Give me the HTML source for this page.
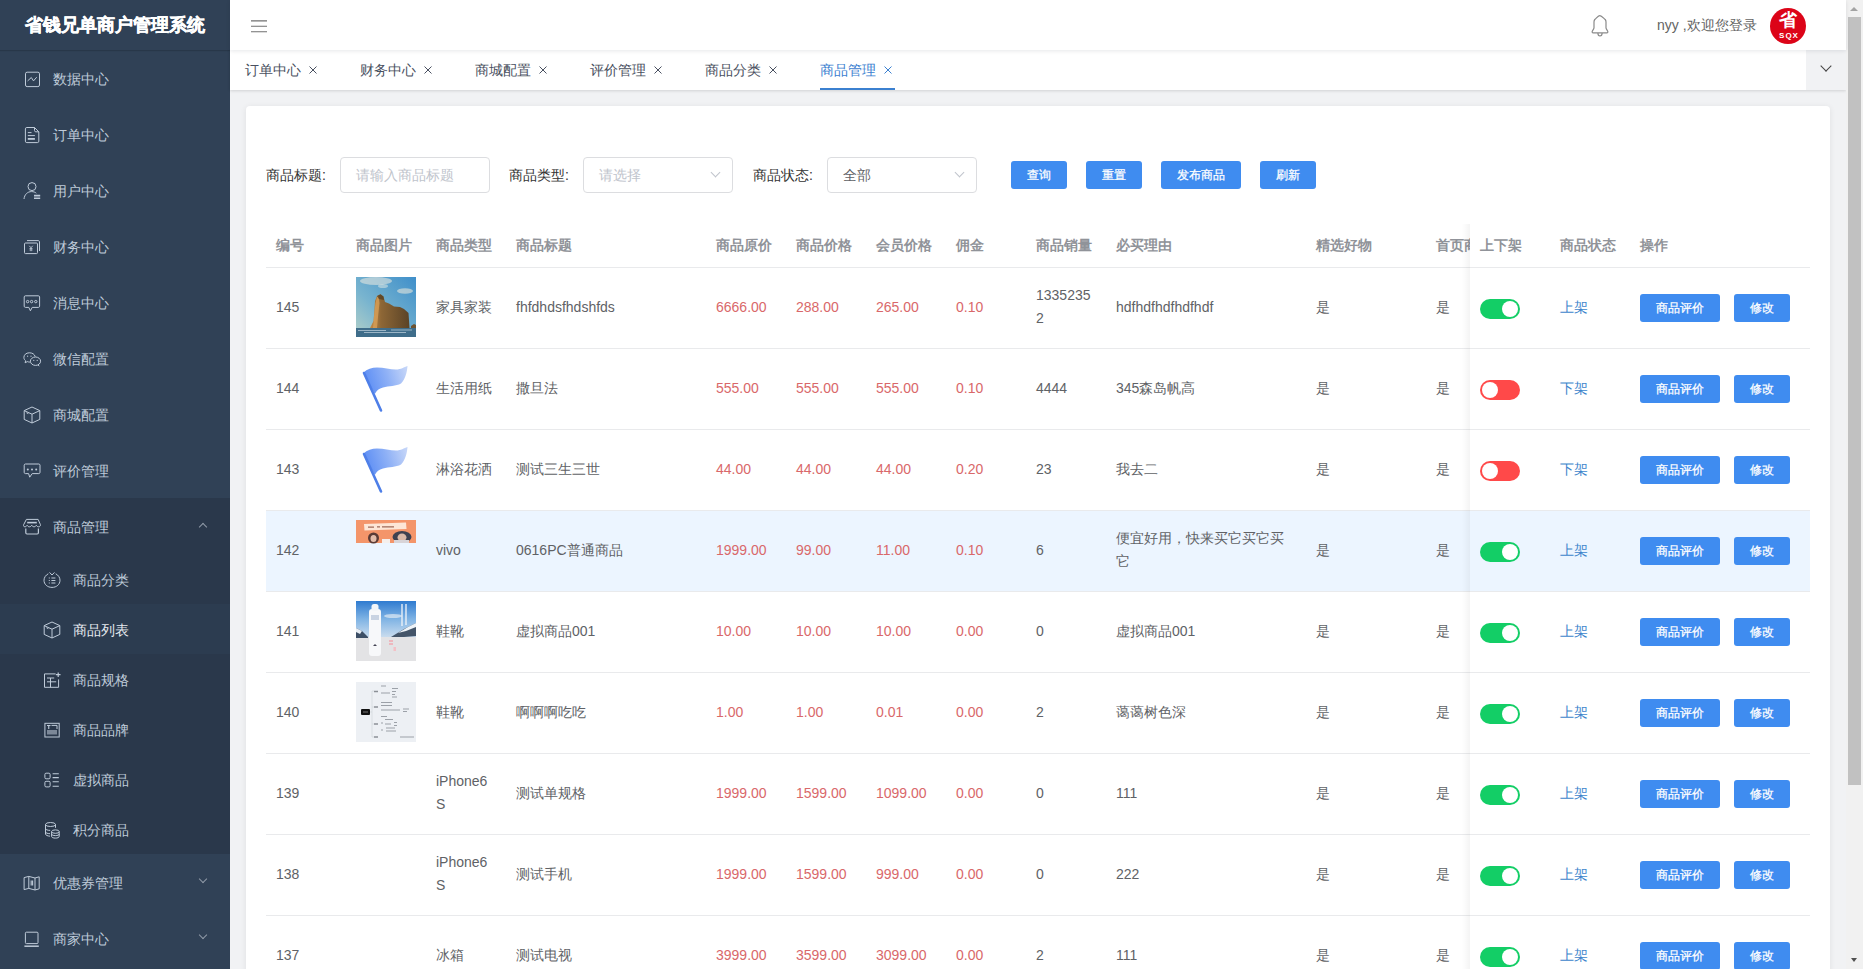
<!DOCTYPE html><html><head><meta charset="utf-8"><style>*{margin:0;padding:0;box-sizing:border-box}
html,body{width:1863px;height:969px;overflow:hidden;background:#f1f2f4;font-family:"Liberation Sans",sans-serif;font-size:14px;color:#606266;position:relative}
#side{position:absolute;left:0;top:0;width:230px;height:969px;background:#304156;color:#bfcbd9;overflow:hidden}
#logo{position:absolute;left:0;top:0;width:230px;height:50px;line-height:50px;text-align:center;color:#fff;font-weight:700;font-size:18px;-webkit-text-stroke:0.4px #fff;box-shadow:0 1px 1px rgba(0,0,0,.15)}
#subbg{position:absolute;left:0;top:498px;width:230px;height:356px;background:#2a384b}
#activebg{position:absolute;left:0;top:604px;width:230px;height:50px;background:#2c3c50}
.mi{position:absolute;left:0;width:230px;height:56px;line-height:56px;font-size:14px;color:#bfcbd9}
.mi svg{position:absolute;left:22px;top:18px;width:20px;height:20px;overflow:visible}
.mi span{position:absolute;left:53px;top:1px}
.sub{position:absolute;left:0;width:230px;height:50px;line-height:50px;font-size:14px;color:#bfcbd9}
.sub svg{position:absolute;left:42px;top:15px;width:20px;height:20px;overflow:visible}
.sub span{position:absolute;left:73px;top:1px}
.sub.act span{color:#e6eaef}
.arrow{position:absolute;left:200px;width:6px;height:6px;border-left:1px solid #909aa8;border-top:1px solid #909aa8}
.arrow.up{transform:rotate(45deg)}
.arrow.down{transform:rotate(225deg)}
#nav{position:absolute;left:230px;top:0;width:1616px;height:50px;background:#fff;box-shadow:0 1px 4px rgba(0,21,41,.10);z-index:5}
#hamb{position:absolute;left:21px;top:20px;width:16px;height:14px}
#hamb i{display:block;height:1px;background:#5a5e66;margin-bottom:4px}
#bell{position:absolute;left:1358px;top:12px;width:24px;height:26px}
#welcome{position:absolute;left:1427px;top:0;height:50px;line-height:50px;font-size:14px;color:#646464}
#avatar{position:absolute;left:1540px;top:8px;width:36px;height:36px;border-radius:50%;background:#dc0418;color:#fff;text-align:center}
#avatar .sheng{position:absolute;left:0;top:2px;width:36px;font-size:18px;line-height:20px;font-weight:bold}
#avatar .sqx{position:absolute;left:1px;top:23px;width:36px;font-size:8px;line-height:10px;font-weight:bold;letter-spacing:1px;font-family:'Liberation Sans Narrow','Liberation Sans',sans-serif}
#tags{position:absolute;left:230px;top:50px;width:1616px;height:40px;background:#fff;box-shadow:0 1px 3px 0 rgba(0,0,0,.12),0 0 3px 0 rgba(0,0,0,.04)}
.tag{position:absolute;top:0;height:40px;line-height:40px;font-size:14px;color:#495060}
.tag svg{position:absolute;right:3px;top:16px;width:8px;height:8px}
.tag.act{color:#3b80d0;border-bottom:2px solid #3b80d0}
#tagdd{position:absolute;left:1576px;top:0;width:40px;height:40px;background:#f1f2f4}
#tagdd i{position:absolute;left:15.5px;top:12px;width:8px;height:8px;border-right:1.2px solid #444;border-bottom:1.2px solid #444;transform:rotate(45deg)}
#card{position:absolute;left:246px;top:106px;width:1584px;height:900px;background:#fff;border-radius:4px;box-shadow:0 1px 6px 0 rgba(0,0,0,.08)}
#scroll{position:absolute;left:1846px;top:0;width:17px;height:969px;background:#f1f1f1}
#thumb{position:absolute;left:2px;top:17px;width:13px;height:768px;background:#c1c1c1}
#sup{position:absolute;left:4px;top:7px;border-left:4px solid transparent;border-right:4px solid transparent;border-bottom:4px solid #a3a3a3}
#sdown{position:absolute;left:5px;top:958px;border-left:3.5px solid transparent;border-right:3.5px solid transparent;border-top:4px solid #505050}
.lbl{position:absolute;top:157px;height:36px;line-height:36px;font-size:14px;color:#333}
.inp{position:absolute;top:157px;height:36px;border:1px solid #dcdde0;border-radius:4px;background:#fff;line-height:34px;padding-left:15px;font-size:14px;color:#606266}
.inp.ph{color:#c0c4cc}
.chev{position:absolute;right:13px;top:11px;width:7px;height:7px;border-right:1px solid #c0c4cc;border-bottom:1px solid #c0c4cc;transform:rotate(45deg)}
.btn{position:absolute;top:161px;height:28px;line-height:28px;text-align:center;background:#3f8cf0;color:#fff;border-radius:3px;font-size:12px;-webkit-text-stroke:0.25px #fff}
.th{position:absolute;top:224px;height:43px;line-height:43px;font-weight:bold;color:#909399;font-size:14px;white-space:nowrap}
#thead{position:absolute;left:0;top:0;width:0;height:0}
.row{position:absolute;left:266px;width:1544px;height:81px;border-bottom:1px solid #e9eaec;background:#fff}
#card + .lbl{}
.row.hov{background:#ecf5ff}
.c{position:absolute;top:-1px;height:80px;display:flex;align-items:center;line-height:23px;font-size:14px;color:#606266;white-space:nowrap}
.cimg{width:60px}
.pic{width:60px;height:60px;display:block}
.red{color:#d9686a}
#fixr{position:absolute;left:1470px;top:224px;width:340px;height:760px;background:#fff}
#fixr::before{content:"";position:absolute;left:0;top:43px;width:340px;height:1px;background:#e9eaec}
#fshadow{position:absolute;left:1462px;top:224px;width:8px;height:760px;background:linear-gradient(to right,rgba(0,0,0,0),rgba(0,0,0,.045))}
#hline{position:absolute;left:266px;top:267px;width:1544px;height:1px;background:#e9eaec}
#fixr .th{top:0}
.frow{position:absolute;left:0;width:340px;height:81px;border-bottom:1px solid #e9eaec;background:#fff}
.frow.hov{background:#ecf5ff}
.sw{position:absolute;left:10px;top:31px;width:40px;height:20px;border-radius:10px}
.sw::after{content:"";position:absolute;top:2px;width:16px;height:16px;border-radius:50%;background:#fff}
.sw.on{background:#13ce66}.sw.on::after{left:22px}
.sw.off{background:#ff4949}.sw.off::after{left:2px}
.lnk{position:absolute;left:90px;top:0;height:80px;line-height:78px;color:#3d85cc;font-size:14px}
.b2{position:absolute;top:26px;height:28px;line-height:28px;text-align:center;background:#3f8cf0;color:#fff;border-radius:3px;font-size:12px;-webkit-text-stroke:0.25px #fff}
</style></head><body>
<div id="side"><div id="logo">省钱兄单商户管理系统</div>
<div id="subbg"></div><div id="activebg"></div>
<div class="mi" style="top:50px"><svg viewBox="0 0 20 20"><rect x="3.5" y="4.2" width="14" height="14.4" rx="1.6" fill="none" stroke="#bfcbd9" stroke-width="1"/><path d="M5.6 12.9 L9.3 9.5 L11.5 12.9 L14.7 9.2" fill="none" stroke="#bfcbd9" stroke-width="1"/></svg><span>数据中心</span></div>
<div class="mi" style="top:106px"><svg viewBox="0 0 20 20"><path d="M4.8 3.5 H12.5 L16.8 7.8 V17.2 C16.8 18.1 16.3 18.6 15.4 18.6 H4.8 C3.9 18.6 3.4 18.1 3.4 17.2 V4.9 C3.4 4 3.9 3.5 4.8 3.5 Z" fill="none" stroke="#bfcbd9" stroke-width="1"/><path d="M12.5 3.5 V6.5 C12.5 7.3 13 7.8 13.8 7.8 H16.8" fill="none" stroke="#bfcbd9" stroke-width="1"/><path d="M5.8 8.6 H9.5 M5.8 11.6 H12.9" fill="none" stroke="#bfcbd9" stroke-width="1"/><path d="M5.8 14.9 H12.9" stroke="#bfcbd9" stroke-width="1.8"/></svg><span>订单中心</span></div>
<div class="mi" style="top:162px"><svg viewBox="0 0 20 20"><circle cx="10" cy="6.6" r="4" fill="none" stroke="#bfcbd9" stroke-width="1"/><path d="M2 19 C2.5 14.5 5.5 11.6 9.5 11.6 C11.5 11.6 13.2 12.2 14.3 13.2" fill="none" stroke="#bfcbd9" stroke-width="1"/><path d="M12 15.6 H18.2 M12 18.2 H18.2" stroke="#bfcbd9" stroke-width="1.6"/></svg><span>用户中心</span></div>
<div class="mi" style="top:218px"><svg viewBox="0 0 20 20"><rect x="2.5" y="7" width="13" height="10.6" rx="1" fill="none" stroke="#bfcbd9" stroke-width="1"/><path d="M5 4.6 H16.3 C17 4.6 17.5 5.1 17.5 5.8 V15" fill="none" stroke="#bfcbd9" stroke-width="1"/><path d="M7.3 9.8 L9 11.8 L10.7 9.8 M9 11.8 V15.2 M7.5 12.6 H10.5 M7.5 14 H10.5" stroke="#bfcbd9" stroke-width=".9" fill="none"/></svg><span>财务中心</span></div>
<div class="mi" style="top:274px"><svg viewBox="0 0 20 20"><path d="M3.4 3.8 H16.4 C17.1 3.8 17.6 4.3 17.6 5 V14.2 C17.6 14.9 17.1 15.4 16.4 15.4 H10.2 L8.4 18.8 L6.8 15.4 H3.4 C2.7 15.4 2.2 14.9 2.2 14.2 V5 C2.2 4.3 2.7 3.8 3.4 3.8 Z" fill="none" stroke="#bfcbd9" stroke-width="1"/><circle cx="5.6" cy="9.6" r="1.2" fill="none" stroke="#bfcbd9" stroke-width="1"/><circle cx="9.6" cy="9.6" r="1.2" fill="none" stroke="#bfcbd9" stroke-width="1"/><circle cx="13.8" cy="9.6" r="1.2" fill="none" stroke="#bfcbd9" stroke-width="1"/></svg><span>消息中心</span></div>
<div class="mi" style="top:330px"><svg viewBox="0 0 20 20"><path d="M13.2 8.6 C12.6 6.2 10.2 4.8 7.3 4.8 C4 4.8 1.9 7 1.9 9.4 C1.9 10.9 2.6 12 3.6 12.8 L3.1 14.8 L5.3 13.6 C6 13.9 6.8 14.1 7.9 14.1" fill="none" stroke="#bfcbd9" stroke-width="1"/><ellipse cx="13.5" cy="13.2" rx="5.1" ry="4.2" fill="none" stroke="#bfcbd9" stroke-width="1"/><path d="M16.2 17 L17.2 18.2" fill="none" stroke="#bfcbd9" stroke-width="1"/><circle cx="5.6" cy="8.2" r=".6" fill="#bfcbd9"/><circle cx="9" cy="8.2" r=".6" fill="#bfcbd9"/><circle cx="11.8" cy="12.4" r=".55" fill="#bfcbd9"/><circle cx="15.2" cy="12.4" r=".55" fill="#bfcbd9"/></svg><span>微信配置</span></div>
<div class="mi" style="top:386px"><svg viewBox="0 0 20 20"><path d="M10 3 L17.8 6.6 V15.4 L10 19 L2.2 15.4 V6.6 Z" fill="none" stroke="#bfcbd9" stroke-width="1"/><path d="M2.2 6.6 L10 10.2 L17.8 6.6 M10 10.2 V19" fill="none" stroke="#bfcbd9" stroke-width="1"/><path d="M4.5 8.8 L6.3 9.6" fill="none" stroke="#bfcbd9" stroke-width="1"/></svg><span>商城配置</span></div>
<div class="mi" style="top:442px"><svg viewBox="0 0 20 20"><path d="M3.4 4 H16.8 C17.5 4 18 4.5 18 5.2 V12.4 C18 13.1 17.5 13.6 16.8 13.6 H10.2 L7.7 17.2 L6.6 13.6 H3.4 C2.7 13.6 2.2 13.1 2.2 12.4 V5.2 C2.2 4.5 2.7 4 3.4 4 Z" fill="none" stroke="#bfcbd9" stroke-width="1"/><circle cx="5.8" cy="9.4" r="1" fill="#bfcbd9"/><circle cx="10" cy="9.4" r="1" fill="#bfcbd9"/><circle cx="14.2" cy="9.4" r="1" fill="#bfcbd9"/></svg><span>评价管理</span></div>
<div class="mi" style="top:498px"><svg viewBox="0 0 20 20"><path d="M4.4 3.4 H16.1 L18.4 8.6 C18.7 9.6 18 10.8 16.6 10.8 C15.4 10.8 14.6 10 14.3 9.2 C14 10 13.2 10.8 12 10.8 C10.8 10.8 10 10 9.7 9.2 C9.4 10 8.6 10.8 7.4 10.8 C6.2 10.8 5.4 10 5.1 9.2 C4.8 10 4 10.8 2.9 10.8 C1.7 10.8 1.3 9.7 1.6 8.8 Z" fill="none" stroke="#bfcbd9" stroke-width="1"/><path d="M5.2 6.6 H14.8" stroke="#bfcbd9" stroke-width="1.6"/><path d="M3.8 12.6 V16.8 C3.8 17.6 4.3 18 5 18 H15.2 C15.9 18 16.4 17.6 16.4 16.8 V12.6" stroke="#bfcbd9" stroke-width="1.2" fill="none"/></svg><span>商品管理</span></div>
<div class="arrow up" style="top:524px"></div>
<div class="sub" style="top:554px"><svg viewBox="0 0 20 20"><path d="M6.3 4.8 C3.8 6 2 8.6 2 11.2 C2 15.4 5.4 18.4 10 18.4 C14.6 18.4 18 15.4 18 11.2 C18 8.6 16.2 6 13.7 4.8" fill="none" stroke="#bfcbd9" stroke-width="1"/><path d="M7.5 3.4 L10 6 L12.5 3.4" fill="none" stroke="#bfcbd9" stroke-width="1"/><path d="M6.8 9 H7.8 M6.8 11.5 H7.8 M6.8 14 H7.8" stroke="#bfcbd9" stroke-width="1.1"/><path d="M9.4 9 H13.4 M9.4 11.5 H13.4 M9.4 14 H13.4" fill="none" stroke="#bfcbd9" stroke-width="1"/></svg><span>商品分类</span></div>
<div class="sub act" style="top:604px"><svg viewBox="0 0 20 20"><path d="M10 3 L17.8 6.6 V15.4 L10 19 L2.2 15.4 V6.6 Z" fill="none" stroke="#bfcbd9" stroke-width="1"/><path d="M2.2 6.6 L10 10.2 L17.8 6.6 M10 10.2 V19" fill="none" stroke="#bfcbd9" stroke-width="1"/><path d="M4.5 8.8 L6.3 9.6" fill="none" stroke="#bfcbd9" stroke-width="1"/></svg><span>商品列表</span></div>
<div class="sub" style="top:654px"><svg viewBox="0 0 20 20"><path d="M13.6 4.9 H2.5 V18.3 H16.6 V10.4" fill="none" stroke="#bfcbd9" stroke-width="1"/><path d="M5 9 H12.2 M5 12.8 H14.2 M8.5 9 V18.3" fill="none" stroke="#bfcbd9" stroke-width="1"/><path d="M16.2 3.4 V8 M13.9 5.7 H18.5" stroke="#bfcbd9" stroke-width="1.2"/></svg><span>商品规格</span></div>
<div class="sub" style="top:704px"><svg viewBox="0 0 20 20"><rect x="2.9" y="4.3" width="14.3" height="13.7" fill="none" stroke="#bfcbd9" stroke-width="1"/><path d="M5 6.5 H8.5 M6.75 6.5 V10" stroke="#bfcbd9" stroke-width="1.1"/><path d="M9.5 6.4 H15 V10" fill="none" stroke="#bfcbd9" stroke-width="1"/><rect x="5" y="11" width="10" height="4.5" fill="#bfcbd9" opacity=".55"/></svg><span>商品品牌</span></div>
<div class="sub" style="top:754px"><svg viewBox="0 0 20 20"><rect x="2.9" y="4.2" width="5.2" height="5.6" rx="1.2" fill="none" stroke="#bfcbd9" stroke-width="1"/><rect x="2.9" y="12.3" width="5.2" height="5.6" rx="1.2" fill="none" stroke="#bfcbd9" stroke-width="1"/><path d="M10.6 4.7 H16.8 M10.6 8.6 H16.8 M10.6 12.8 H16.8 M10.6 17.2 H16.8" stroke="#bfcbd9" stroke-width="1.1"/></svg><span>虚拟商品</span></div>
<div class="sub" style="top:804px"><svg viewBox="0 0 20 20"><ellipse cx="8.5" cy="5.5" rx="5" ry="2" fill="none" stroke="#bfcbd9" stroke-width="1"/><path d="M3.5 5.5 V15 C3.5 16.2 5.5 17 8 17.2 M13.5 5.5 V8.8 M3.5 9.4 C3.5 10.6 5.5 11.4 8.2 11.4 M3.5 12.8 C3.5 14 5.5 14.6 8 14.7" fill="none" stroke="#bfcbd9" stroke-width="1"/><ellipse cx="13.4" cy="12.6" rx="3.8" ry="1.7" fill="none" stroke="#bfcbd9" stroke-width="1"/><path d="M9.6 12.6 V17.4 C9.6 18.5 11.3 19.1 13.4 19.1 C15.5 19.1 17.2 18.5 17.2 17.4 V12.6 M9.6 15 C9.6 16 11.3 16.6 13.4 16.6 C15.5 16.6 17.2 16 17.2 15" fill="none" stroke="#bfcbd9" stroke-width="1"/></svg><span>积分商品</span></div>
<div class="mi" style="top:854px"><svg viewBox="0 0 20 20"><path d="M2.1 5.6 L6.8 4.4 L13 6 L17.2 4.8 V16.8 L13 18 L6.8 16.4 L2.1 17.6 Z" fill="none" stroke="#bfcbd9" stroke-width="1"/><path d="M6.8 4.4 V16.4 M13 6 V18" fill="none" stroke="#bfcbd9" stroke-width="1"/><path d="M9.2 8.6 V13.4 M10.6 8.6 V13.4" stroke="#bfcbd9" stroke-width="1.1"/></svg><span>优惠券管理</span></div>
<div class="arrow down" style="top:876px"></div>
<div class="mi" style="top:910px"><svg viewBox="0 0 20 20"><rect x="3.4" y="4.2" width="12.6" height="11.4" rx="1" fill="none" stroke="#bfcbd9" stroke-width="1"/><path d="M2.4 18.2 H16.8" stroke="#bfcbd9" stroke-width="1.5"/></svg><span>商家中心</span></div>
<div class="arrow down" style="top:932px"></div>
</div>
<div id="nav"><svg id="hamb" viewBox="0 0 16 14"><path d="M0 0.9 H16 M0 6.3 H16 M0 11.7 H16" stroke="#707070" stroke-width="1.1"/></svg>
<svg id="bell" viewBox="0 0 24 26"><path d="M11.9 3.6 C10.5 3.6 9.5 5 6.8 7.5 C6.2 8.2 6 9 6 10 V15.8 C6 17 5 18 4.4 19 C3.8 20 4.2 20.8 5.2 20.8 H18.8 C19.8 20.8 20.2 20 19.6 19 C19 18 18 17 18 15.8 V10 C18 9 17.8 8.2 17.2 7.5 C14.5 5 13.3 3.6 11.9 3.6 Z" fill="none" stroke="#8a8a8a" stroke-width="1.2"/><path d="M9.9 21 C9.9 23 10.8 24 12 24 C13.2 24 14.1 23 14.1 21" fill="none" stroke="#8a8a8a" stroke-width="1.2"/></svg>
<div id="welcome">nyy ,欢迎您登录</div>
<div id="avatar"><span class="sheng">省</span><span class="sqx">SQX</span></div>
</div>
<div id="tags">
<div class="tag" style="left:15px;padding-right:19px">订单中心<svg viewBox="0 0 8 8"><path d="M0.5 0.5 L7.5 7.5 M7.5 0.5 L0.5 7.5" stroke="#495060" stroke-width="1"/></svg></div>
<div class="tag" style="left:130px;padding-right:19px">财务中心<svg viewBox="0 0 8 8"><path d="M0.5 0.5 L7.5 7.5 M7.5 0.5 L0.5 7.5" stroke="#495060" stroke-width="1"/></svg></div>
<div class="tag" style="left:245px;padding-right:19px">商城配置<svg viewBox="0 0 8 8"><path d="M0.5 0.5 L7.5 7.5 M7.5 0.5 L0.5 7.5" stroke="#495060" stroke-width="1"/></svg></div>
<div class="tag" style="left:360px;padding-right:19px">评价管理<svg viewBox="0 0 8 8"><path d="M0.5 0.5 L7.5 7.5 M7.5 0.5 L0.5 7.5" stroke="#495060" stroke-width="1"/></svg></div>
<div class="tag" style="left:475px;padding-right:19px">商品分类<svg viewBox="0 0 8 8"><path d="M0.5 0.5 L7.5 7.5 M7.5 0.5 L0.5 7.5" stroke="#495060" stroke-width="1"/></svg></div>
<div class="tag act" style="left:590px;padding-right:19px">商品管理<svg viewBox="0 0 8 8"><path d="M0.5 0.5 L7.5 7.5 M7.5 0.5 L0.5 7.5" stroke="#3b80d0" stroke-width="1"/></svg></div>
<div id="tagdd"><i></i></div>
</div>
<div id="card"></div>
<div class="lbl" style="left:266px">商品标题:</div>
<div class="inp ph" style="left:340px;width:150px">请输入商品标题</div>
<div class="lbl" style="left:509px">商品类型:</div>
<div class="inp ph" style="left:583px;width:150px">请选择<i class="chev"></i></div>
<div class="lbl" style="left:753px">商品状态:</div>
<div class="inp" style="left:827px;width:150px">全部<i class="chev"></i></div>
<div class="btn" style="left:1011px;width:56px">查询</div>
<div class="btn" style="left:1086px;width:56px">重置</div>
<div class="btn" style="left:1161px;width:80px">发布商品</div>
<div class="btn" style="left:1260px;width:56px">刷新</div>
<div id="thead">
<div class="th" style="left:276px">编号</div>
<div class="th" style="left:356px">商品图片</div>
<div class="th" style="left:436px">商品类型</div>
<div class="th" style="left:516px">商品标题</div>
<div class="th" style="left:716px">商品原价</div>
<div class="th" style="left:796px">商品价格</div>
<div class="th" style="left:876px">会员价格</div>
<div class="th" style="left:956px">佣金</div>
<div class="th" style="left:1036px">商品销量</div>
<div class="th" style="left:1116px">必买理由</div>
<div class="th" style="left:1316px">精选好物</div>
<div class="th" style="left:1436px">首页商品</div>
</div>
<div class="row" style="top:268px">
<div class="c" style="left:10px;width:60px">145</div>
<div class="c cimg" style="left:90px"><svg class="pic" viewBox="0 0 60 60"><defs><linearGradient id="sky" x1="1" y1="0" x2="0" y2="1"><stop offset="0" stop-color="#3f8fca"/><stop offset=".6" stop-color="#78b4cf"/><stop offset="1" stop-color="#b3d0c8"/></linearGradient><linearGradient id="rk" x1="0" y1="0" x2="1" y2="0"><stop offset="0" stop-color="#c68d48"/><stop offset=".28" stop-color="#8e6736"/><stop offset="1" stop-color="#5a4327"/></linearGradient></defs><rect width="60" height="60" fill="url(#sky)"/><ellipse cx="20" cy="4" rx="16" ry="4" fill="#e2e6e0" opacity=".6"/><ellipse cx="27" cy="9" rx="5" ry="2" fill="#e6ebe6" opacity=".5"/><ellipse cx="49" cy="14" rx="8" ry="2.8" fill="#e4e6dc" opacity=".6"/><path d="M14 51 L17.5 44 L18.5 32 L19 24 L21 19 L24.5 17.3 L27.5 19.5 L29 25 L33 26.5 L38 29.5 L44 30 L48 32 L52.5 36 L53.5 51 Z" fill="url(#rk)"/><path d="M19.5 26 L21 20 L22.5 19 L23.5 26 L22 40 L21 51 L17 51 L18.5 34 Z" fill="#dca35a" opacity=".75"/><path d="M21 19 L24.5 17.3 L27.5 19.5 L28 23 L23 22 Z" fill="#4e3c24" opacity=".7"/><path d="M55 49 L58 47 L60 48 V51 H55Z" fill="#6e5330"/><rect y="51" width="60" height="9" fill="#3f6d8a"/><path d="M2 53.5 H30 M8 55.5 H50 M35 53 H56" stroke="#cfe0ea" stroke-width="0.8" opacity=".8"/></svg></div>
<div class="c" style="left:170px;width:60px">家具家装</div>
<div class="c" style="left:250px;width:180px">fhfdhdsfhdshfds</div>
<div class="c red" style="left:450px;width:60px">6666.00</div>
<div class="c red" style="left:530px;width:60px">288.00</div>
<div class="c red" style="left:610px;width:60px">265.00</div>
<div class="c red" style="left:690px;width:60px">0.10</div>
<div class="c" style="left:770px;width:60px">1335235<br>2</div>
<div class="c" style="left:850px;width:180px">hdfhdfhdfhdfhdf</div>
<div class="c" style="left:1050px;width:100px">是</div>
<div class="c" style="left:1170px;width:24px">是</div>
</div>
<div class="row" style="top:349px">
<div class="c" style="left:10px;width:60px">144</div>
<div class="c cimg" style="left:90px"><svg class="pic" viewBox="0 0 60 60"><defs><linearGradient id="fl" x1="0" y1=".5" x2="1" y2=".3"><stop offset="0" stop-color="#5a8cf4"/><stop offset=".55" stop-color="#8fb1f6"/><stop offset="1" stop-color="#c3d4f8"/></linearGradient></defs><path d="M7.5 14.5 C11 11 16 9.5 21 9.5 C28 9.5 34 11.5 40 11.5 C45 11.5 48 9 51.5 8 C51 14 49.5 21 45 25.5 C40 28.5 33 27.5 27 29.5 C23 30.5 20.5 32.5 18.8 36 Z" fill="url(#fl)"/><path d="M8 15 L25 52.5" stroke="#4e7fe8" stroke-width="2.6" stroke-linecap="round"/></svg></div>
<div class="c" style="left:170px;width:60px">生活用纸</div>
<div class="c" style="left:250px;width:180px">撒旦法</div>
<div class="c red" style="left:450px;width:60px">555.00</div>
<div class="c red" style="left:530px;width:60px">555.00</div>
<div class="c red" style="left:610px;width:60px">555.00</div>
<div class="c red" style="left:690px;width:60px">0.10</div>
<div class="c" style="left:770px;width:60px">4444</div>
<div class="c" style="left:850px;width:180px">345森岛帆高</div>
<div class="c" style="left:1050px;width:100px">是</div>
<div class="c" style="left:1170px;width:24px">是</div>
</div>
<div class="row" style="top:430px">
<div class="c" style="left:10px;width:60px">143</div>
<div class="c cimg" style="left:90px"><svg class="pic" viewBox="0 0 60 60"><defs><linearGradient id="fl" x1="0" y1=".5" x2="1" y2=".3"><stop offset="0" stop-color="#5a8cf4"/><stop offset=".55" stop-color="#8fb1f6"/><stop offset="1" stop-color="#c3d4f8"/></linearGradient></defs><path d="M7.5 14.5 C11 11 16 9.5 21 9.5 C28 9.5 34 11.5 40 11.5 C45 11.5 48 9 51.5 8 C51 14 49.5 21 45 25.5 C40 28.5 33 27.5 27 29.5 C23 30.5 20.5 32.5 18.8 36 Z" fill="url(#fl)"/><path d="M8 15 L25 52.5" stroke="#4e7fe8" stroke-width="2.6" stroke-linecap="round"/></svg></div>
<div class="c" style="left:170px;width:60px">淋浴花洒</div>
<div class="c" style="left:250px;width:180px">测试三生三世</div>
<div class="c red" style="left:450px;width:60px">44.00</div>
<div class="c red" style="left:530px;width:60px">44.00</div>
<div class="c red" style="left:610px;width:60px">44.00</div>
<div class="c red" style="left:690px;width:60px">0.20</div>
<div class="c" style="left:770px;width:60px">23</div>
<div class="c" style="left:850px;width:180px">我去二</div>
<div class="c" style="left:1050px;width:100px">是</div>
<div class="c" style="left:1170px;width:24px">是</div>
</div>
<div class="row hov" style="top:511px">
<div class="c" style="left:10px;width:60px">142</div>
<div class="c cimg" style="left:90px"><svg class="pic" viewBox="0 0 60 60"><rect y="0" width="60" height="23" fill="#f4956a"/><path d="M8 4 L50 2.5 L50.5 9 L8.5 10.5 Z" fill="#fde6d6"/><path d="M12 7.2 H18 M21 6.8 H24 M26 6.8 H38" stroke="#a06a58" stroke-width="1.2"/><ellipse cx="17.5" cy="18" rx="5.5" ry="5.5" fill="#5a3b36"/><ellipse cx="17.5" cy="18.5" rx="3" ry="3.5" fill="#e2bcaa"/><ellipse cx="46" cy="17" rx="9.5" ry="6" fill="#3e4150"/><ellipse cx="46" cy="17.5" rx="4.5" ry="4" fill="#d9b9a8"/><rect x="38" y="20" width="15" height="3" fill="#d8d4d8"/><rect x="26" y="19" width="8" height="4" fill="#f5efec"/></svg></div>
<div class="c" style="left:170px;width:60px">vivo</div>
<div class="c" style="left:250px;width:180px">0616PC普通商品</div>
<div class="c red" style="left:450px;width:60px">1999.00</div>
<div class="c red" style="left:530px;width:60px">99.00</div>
<div class="c red" style="left:610px;width:60px">11.00</div>
<div class="c red" style="left:690px;width:60px">0.10</div>
<div class="c" style="left:770px;width:60px">6</div>
<div class="c" style="left:850px;width:180px">便宜好用，快来买它买它买<br>它</div>
<div class="c" style="left:1050px;width:100px">是</div>
<div class="c" style="left:1170px;width:24px">是</div>
</div>
<div class="row" style="top:592px">
<div class="c" style="left:10px;width:60px">141</div>
<div class="c cimg" style="left:90px"><svg class="pic" viewBox="0 0 60 60"><defs><linearGradient id="bs" x1="0" y1="0" x2="0" y2="1"><stop offset="0" stop-color="#2f7bd0"/><stop offset=".5" stop-color="#7fb3e4"/><stop offset="1" stop-color="#c9dcee"/></linearGradient></defs><rect width="60" height="60" fill="#e2e3e6"/><rect width="60" height="36" fill="url(#bs)"/><ellipse cx="37" cy="15" rx="9" ry="2" fill="#dfe9f3" opacity=".7"/><path d="M0 27 L6 30 L12 36 L12 40 L0 40 Z" fill="#3d4f66"/><path d="M0 27 L6 30 L4 33 L0 31Z" fill="#e8eef5"/><path d="M35 36 L48 28 L60 22 V35 L48 36 Z" fill="#445569"/><path d="M42 32 L52 26 L60 22 V26 L50 30 Z" fill="#eef3f8"/><rect y="37" width="60" height="23" fill="#e3e3e5"/><rect x="13" y="8" width="12" height="47" rx="3" fill="#f7f8fa"/><rect x="15.5" y="3" width="7" height="7" rx="2.5" fill="#f2f5f8"/><rect x="15" y="14" width="8" height="5" fill="#c9d3e2"/><path d="M17 45 L19 43 L21 45Z" fill="#445"/><path d="M46 3 V25 M50 3 V24" stroke="#f4f7fb" stroke-width="1.6" opacity=".8"/><circle cx="34" cy="40" r="1" fill="#f0a8b0"/><circle cx="36" cy="40" r="1" fill="#f0a8b0"/><circle cx="34" cy="43" r="1" fill="#f0a8b0"/><circle cx="36" cy="43" r="1" fill="#f0a8b0"/><rect x="37.5" y="46" width="2.5" height="4" fill="#f4c0c6"/></svg></div>
<div class="c" style="left:170px;width:60px">鞋靴</div>
<div class="c" style="left:250px;width:180px">虚拟商品001</div>
<div class="c red" style="left:450px;width:60px">10.00</div>
<div class="c red" style="left:530px;width:60px">10.00</div>
<div class="c red" style="left:610px;width:60px">10.00</div>
<div class="c red" style="left:690px;width:60px">0.00</div>
<div class="c" style="left:770px;width:60px">0</div>
<div class="c" style="left:850px;width:180px">虚拟商品001</div>
<div class="c" style="left:1050px;width:100px">是</div>
<div class="c" style="left:1170px;width:24px">是</div>
</div>
<div class="row" style="top:673px">
<div class="c" style="left:10px;width:60px">140</div>
<div class="c cimg" style="left:90px"><svg class="pic" viewBox="0 0 60 60"><rect width="60" height="60" fill="#edf0f4"/><rect x="5" y="27" width="9" height="6" rx="1" fill="#111"/><rect x="7" y="29.5" width="5" height="1" fill="#777"/><path d="M14 30 H16 M16 9 V55 M16 9 H18 M16 25 H18 M16 42 H18 M16 55 H18" stroke="#c7ccd2" stroke-width=".5" fill="none"/><path d="M18 9.5 H22 M18 25 H22 M18 42 H22 M18 55 H22" stroke="#8c9096" stroke-width="1.3"/><path d="M25 4 H30 M25 11 H34 M36 6.5 H42 M36 9.5 H40 M36 12.5 H39 M36 15 H41 M25 20.5 H36 M25 23.5 H36 M25 28 H44 M47 27 H53 M47 29.5 H51 M25 34.5 H31 M29 37.5 H37 M25 41 H27 M29 42 H35 M38 40.5 H41 M38 43.5 H41 M25 48 H27 M30 46 H39 M30 49 H40 M44 55 H58" stroke="#9ca1a8" stroke-width="1" fill="none"/></svg></div>
<div class="c" style="left:170px;width:60px">鞋靴</div>
<div class="c" style="left:250px;width:180px">啊啊啊吃吃</div>
<div class="c red" style="left:450px;width:60px">1.00</div>
<div class="c red" style="left:530px;width:60px">1.00</div>
<div class="c red" style="left:610px;width:60px">0.01</div>
<div class="c red" style="left:690px;width:60px">0.00</div>
<div class="c" style="left:770px;width:60px">2</div>
<div class="c" style="left:850px;width:180px">蔼蔼树色深</div>
<div class="c" style="left:1050px;width:100px">是</div>
<div class="c" style="left:1170px;width:24px">是</div>
</div>
<div class="row" style="top:754px">
<div class="c" style="left:10px;width:60px">139</div>
<div class="c cimg" style="left:90px"></div>
<div class="c" style="left:170px;width:60px">iPhone6<br>S</div>
<div class="c" style="left:250px;width:180px">测试单规格</div>
<div class="c red" style="left:450px;width:60px">1999.00</div>
<div class="c red" style="left:530px;width:60px">1599.00</div>
<div class="c red" style="left:610px;width:60px">1099.00</div>
<div class="c red" style="left:690px;width:60px">0.00</div>
<div class="c" style="left:770px;width:60px">0</div>
<div class="c" style="left:850px;width:180px">111</div>
<div class="c" style="left:1050px;width:100px">是</div>
<div class="c" style="left:1170px;width:24px">是</div>
</div>
<div class="row" style="top:835px">
<div class="c" style="left:10px;width:60px">138</div>
<div class="c cimg" style="left:90px"></div>
<div class="c" style="left:170px;width:60px">iPhone6<br>S</div>
<div class="c" style="left:250px;width:180px">测试手机</div>
<div class="c red" style="left:450px;width:60px">1999.00</div>
<div class="c red" style="left:530px;width:60px">1599.00</div>
<div class="c red" style="left:610px;width:60px">999.00</div>
<div class="c red" style="left:690px;width:60px">0.00</div>
<div class="c" style="left:770px;width:60px">0</div>
<div class="c" style="left:850px;width:180px">222</div>
<div class="c" style="left:1050px;width:100px">是</div>
<div class="c" style="left:1170px;width:24px">是</div>
</div>
<div class="row" style="top:916px">
<div class="c" style="left:10px;width:60px">137</div>
<div class="c cimg" style="left:90px"></div>
<div class="c" style="left:170px;width:60px">冰箱</div>
<div class="c" style="left:250px;width:180px">测试电视</div>
<div class="c red" style="left:450px;width:60px">3999.00</div>
<div class="c red" style="left:530px;width:60px">3599.00</div>
<div class="c red" style="left:610px;width:60px">3099.00</div>
<div class="c red" style="left:690px;width:60px">0.00</div>
<div class="c" style="left:770px;width:60px">2</div>
<div class="c" style="left:850px;width:180px">111</div>
<div class="c" style="left:1050px;width:100px">是</div>
<div class="c" style="left:1170px;width:24px">是</div>
</div>
<div id="hline"></div>
<div id="fshadow"></div><div id="fixr">
<div class="th" style="left:10px">上下架</div>
<div class="th" style="left:90px">商品状态</div>
<div class="th" style="left:170px">操作</div>
<div class="frow" style="top:44px"><div class="sw on"></div><div class="lnk">上架</div><div class="b2" style="left:170px;width:80px">商品评价</div><div class="b2" style="left:264px;width:56px">修改</div></div>
<div class="frow" style="top:125px"><div class="sw off"></div><div class="lnk">下架</div><div class="b2" style="left:170px;width:80px">商品评价</div><div class="b2" style="left:264px;width:56px">修改</div></div>
<div class="frow" style="top:206px"><div class="sw off"></div><div class="lnk">下架</div><div class="b2" style="left:170px;width:80px">商品评价</div><div class="b2" style="left:264px;width:56px">修改</div></div>
<div class="frow hov" style="top:287px"><div class="sw on"></div><div class="lnk">上架</div><div class="b2" style="left:170px;width:80px">商品评价</div><div class="b2" style="left:264px;width:56px">修改</div></div>
<div class="frow" style="top:368px"><div class="sw on"></div><div class="lnk">上架</div><div class="b2" style="left:170px;width:80px">商品评价</div><div class="b2" style="left:264px;width:56px">修改</div></div>
<div class="frow" style="top:449px"><div class="sw on"></div><div class="lnk">上架</div><div class="b2" style="left:170px;width:80px">商品评价</div><div class="b2" style="left:264px;width:56px">修改</div></div>
<div class="frow" style="top:530px"><div class="sw on"></div><div class="lnk">上架</div><div class="b2" style="left:170px;width:80px">商品评价</div><div class="b2" style="left:264px;width:56px">修改</div></div>
<div class="frow" style="top:611px"><div class="sw on"></div><div class="lnk">上架</div><div class="b2" style="left:170px;width:80px">商品评价</div><div class="b2" style="left:264px;width:56px">修改</div></div>
<div class="frow" style="top:692px"><div class="sw on"></div><div class="lnk">上架</div><div class="b2" style="left:170px;width:80px">商品评价</div><div class="b2" style="left:264px;width:56px">修改</div></div>
</div>
<div id="scroll"><div id="sup"></div><div id="thumb"></div><div id="sdown"></div></div>
</body></html>
